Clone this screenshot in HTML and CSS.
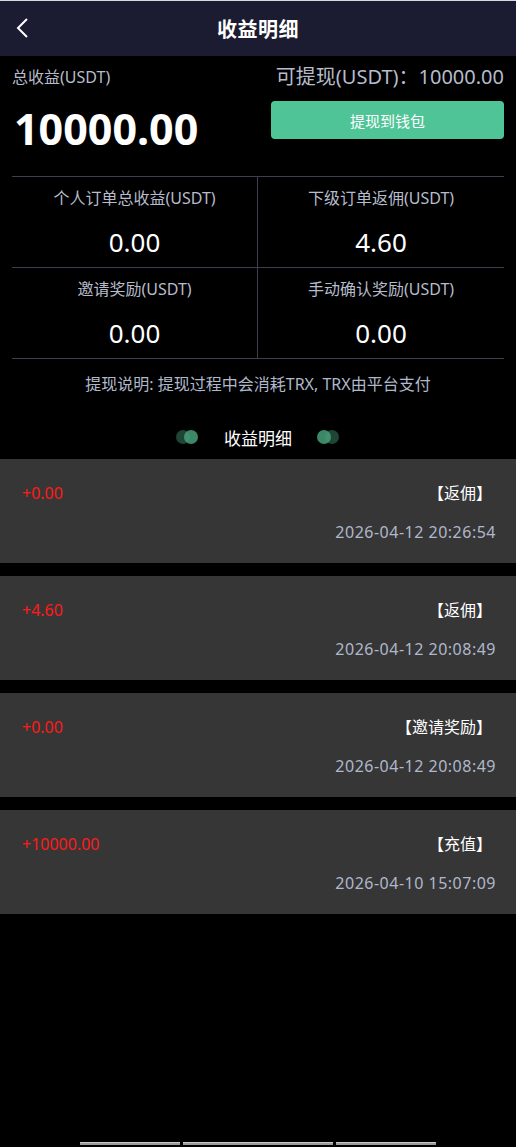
FILE: index.html
```html
<!DOCTYPE html>
<html>
<head>
    <meta charset="utf-8">
    <title>收益明细</title>
    <link rel="stylesheet" href="styles.css">
</head>
<body>
    <div class="page">
        <div class="topbar">
            <span class="back">
                <svg width="16" height="24" viewBox="0 0 16 24"><path d="M13 3 L4 12 L13 21" fill="none" stroke="#fff" stroke-width="2"/></svg>
            </span>
            <h1>收益明细</h1>
        </div>

        <!-- total and withdraw -->
        <div class="summary">
            <div class="total">
                <p class="label">总收益(USDT)</p>
                <p class="big">10000.00</p>
            </div>
            <div class="withdraw">
                <p class="avail">可提现(USDT)：10000.00</p>
                <button class="btn">提现到钱包</button>
            </div>
        </div>

        <div class="stats">
            <div class="cell">
                <p class="label">个人订单总收益(USDT)</p>
                <p class="num">0.00</p>
            </div>
            <div class="cell">
                <p class="label">下级订单返佣(USDT)</p>
                <p class="num">4.60</p>
            </div>
            <div class="cell">
                <p class="label">邀请奖励(USDT)</p>
                <p class="num">0.00</p>
            </div>
            <div class="cell">
                <p class="label">手动确认奖励(USDT)</p>
                <p class="num">0.00</p>
            </div>
        </div>

        <p class="note">提现说明: 提现过程中会消耗TRX, TRX由平台支付</p>

        <div class="section-title">
            <span class="dots left"><i></i><i></i></span>
            <span>收益明细</span>
            <span class="dots right"><i></i><i></i></span>
        </div>

        <div class="list">
            <div class="item">
                <div class="row">
                    <span class="amount">+0.00</span>
                    <span class="tag">【返佣】</span>
                </div>
                <p class="time">2026-04-12 20:26:54</p>
            </div>
            <div class="item">
                <div class="row">
                    <span class="amount">+4.60</span>
                    <span class="tag">【返佣】</span>
                </div>
                <p class="time">2026-04-12 20:08:49</p>
            </div>
            <div class="item">
                <div class="row">
                    <span class="amount">+0.00</span>
                    <span class="tag">【邀请奖励】</span>
                </div>
                <p class="time">2026-04-12 20:08:49</p>
            </div>
            <div class="item">
                <div class="row">
                    <span class="amount">+10000.00</span>
                    <span class="tag">【充值】</span>
                </div>
                <p class="time">2026-04-10 15:07:09</p>
            </div>
        </div>

        <div class="bottombar">
            <span class="seg s1"></span>
            <span class="seg s2"></span>
            <span class="seg s3"></span>
        </div>
    </div>
</body>
</html>
```
FILE: styles.css
```css
*{
    box-sizing:border-box;
}
body{
    margin:0;
    background-color:#000000;
    color:#ffffff;
    font-family:"Noto Sans","Noto Sans CJK SC",sans-serif;
}
p{
    margin:0;
}
.page{
    min-height:1147px;
    display:flex;
    flex-direction:column;
}
.topbar{
    height:57px;
    background-color:#1b1c31;
    border-top:1px solid #d8d8e0;
    border-bottom:1px solid #000;
    display:flex;
    align-items:center;
    justify-content:center;
    position:relative;
}
.topbar .back{
    position:absolute;
    left:14px;
    top:15px;
}
.topbar h1{
    margin:0;
    font-size:20px;
    font-weight:bold;
    letter-spacing:0.5px;
}

.summary{
    display:flex;
    justify-content:space-between;
    padding-top:6px;
    height:120px;
    border-bottom:1px solid #3d3e50;
    margin:0 12px;
}
.summary .label{
    font-size:16px;
    color:#b6bccb;
    line-height:28px;
}
.summary .big{
    font-size:43px;
    font-weight:bold;
    line-height:50px;
    margin-top:13px;
    margin-left:2px;
}
.withdraw{
    width:233px;
    display:flex;
    flex-direction:column;
    align-items:flex-end;
}
.avail{
    font-size:20px;
    color:#b6bccb;
    line-height:28px;
    white-space:nowrap;
}
.btn{
    margin-top:10px;
    width:233px;
    height:38px;
    border:none;
    border-radius:4px;
    background-color:#4fc497;
    color:#ffffff;
    font-family:inherit;
    font-size:15px;
}

.stats{
    margin:0 12px;
    display:grid;
    grid-template-columns:1fr 1fr;
}
.cell{
    height:91px;
    border-bottom:1px solid #3d3e50;
    text-align:center;
    padding-top:10px;
}
.cell:nth-child(odd){
    border-right:1px solid #3d3e50;
}
.cell .label{
    font-size:16px;
    color:#b6bccb;
    line-height:22px;
}
.cell .num{
    font-size:26px;
    line-height:36px;
    margin-top:15px;
}

.note{
    text-align:center;
    font-size:16px;
    color:#b0b8cc;
    line-height:22px;
    margin-top:14px;
}

.section-title{
    display:flex;
    justify-content:center;
    align-items:center;
    gap:25px;
    font-size:17px;
    height:44px;
    margin-top:20px;
}
.dots{
    display:flex;
    width:23px;
    height:14px;
    position:relative;
}
.dots i{
    position:absolute;
    top:0;
    width:14px;
    height:14px;
    border-radius:50%;
}
.dots i:first-child{
    left:0;
}
.dots i:last-child{
    left:8px;
}
.dots.left i:first-child{
    background-color:#1e4535;
}
.dots.left i:last-child{
    background-color:rgba(70,160,120,0.85);
}
.dots.right i:first-child{
    background-color:rgba(70,160,120,0.85);
    z-index:1;
}
.dots.right i:last-child{
    background-color:#1e4535;
}

.list{
    display:flex;
    flex-direction:column;
    gap:13px;
}
.item{
    height:104px;
    background-color:#363636;
    padding:24px 20px 0 22px;
}
.item .row{
    display:flex;
    justify-content:space-between;
    line-height:20px;
}
.amount{
    color:#ff1a1a;
    font-size:16px;
}
.tag{
    font-size:16px;
    color:#ffffff;
    margin-right:4px;
}
.time{
    text-align:right;
    font-size:16px;
    letter-spacing:0.5px;
    color:#b0b8cc;
    line-height:20px;
    margin-top:19px;
}

.bottombar{
    margin-top:auto;
    display:flex;
    gap:3px;
    padding-left:80px;
    height:5px;
}
.seg{
    height:3px;
    background-color:#9a9a9a;
    border-top:1px solid #c8c8c8;
}
.s1{ width:100px; }
.s2{ width:150px; }
.s3{ width:100px; }
```
